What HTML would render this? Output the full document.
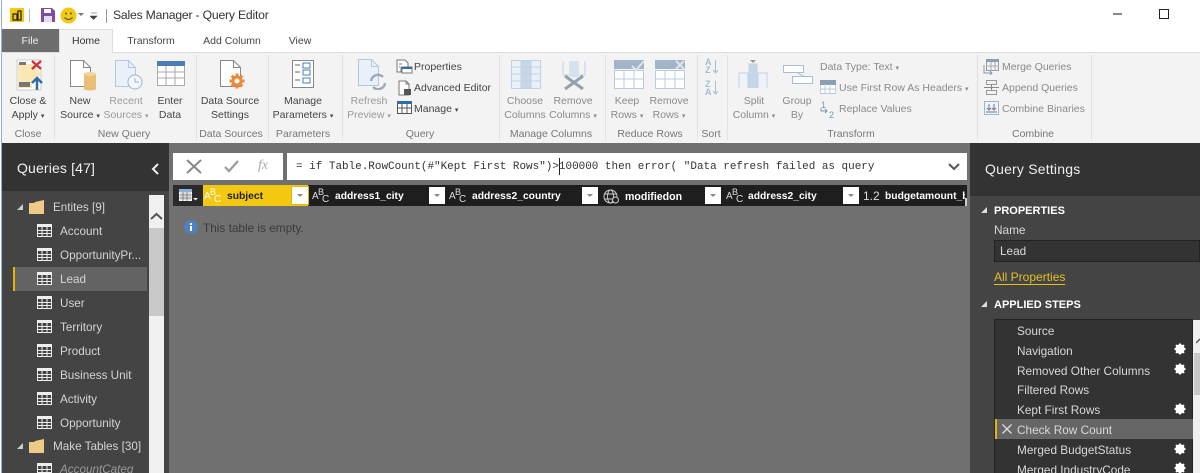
<!DOCTYPE html>
<html><head><meta charset="utf-8">
<style>
html,body{margin:0;padding:0;width:1200px;height:473px;overflow:hidden;background:#fff}
body{font-family:"Liberation Sans",sans-serif;font-size:10.5px;color:#444;position:relative}
.b,.t,.c,svg{position:absolute}
.t{white-space:nowrap}
.c{white-space:nowrap;text-align:center;transform:translateX(-50%)}
.g{color:#8a8a8a}
.l{color:#777}
.q{color:#d4d4d4;font-size:11.7px}
.h{color:#fff;font-weight:bold;font-size:10.3px}
.s{color:#d8d8d8;font-size:11.8px}
.m{font-family:"Liberation Mono",monospace;font-size:10.96px;color:#333}
.dd{position:absolute;width:16px;height:17px;background:#fff;top:187px}
.dd:after{content:"";position:absolute;left:5px;top:7px;border:3px solid transparent;border-top:3px solid #888}
.abc{position:absolute;color:#ddd;font-size:10px;top:191px}
.abc sup{position:absolute;left:6px;top:-4px;font-size:9px;line-height:10px}
.abc i{position:absolute;left:10px;top:3px;font-style:normal;font-size:10px}
.k{font-size:7px}
</style></head><body>
<div class="b" style="left:1px;top:0;width:1px;height:473px;background:#8db4d8"></div>

<!-- title bar -->
<div class="b" style="left:10px;top:8px;width:14px;height:14px;background:#f2c811"></div>
<svg style="left:10px;top:8px" width="14" height="14"><path d="M3 6h4v6H3zM8 3h3v9H8z" fill="none" stroke="#222" stroke-width="1.2"/></svg>
<div class="b" style="left:29px;top:9px;width:1px;height:13px;background:#bbb"></div>
<svg style="left:41px;top:8px" width="14" height="14"><path d="M0 0h11l3 3v11H0z" fill="#7a4fa3"/><rect x="3" y="1" width="7" height="4" fill="#fff"/><rect x="3" y="8" width="8" height="6" fill="#e6dcef"/></svg>
<svg style="left:60px;top:7px" width="17" height="17"><circle cx="8.500" cy="8.500" r="8" fill="#f2c811"/><circle cx="6" cy="6.500" r="1" fill="#555"/><circle cx="11" cy="6.500" r="1" fill="#555"/><path d="M4.500 10.500q4 4 8 0" stroke="#555" fill="none"/></svg>
<svg style="left:78px;top:13px" width="7" height="5"><path d="M0 0h6L3 3z" fill="#777"/></svg>
<svg style="left:90px;top:12px" width="8" height="8"><path d="M1 1h6M0 4h7L3.500 7.500z" fill="#444" stroke="#444" stroke-width=".6"/></svg>
<div class="b" style="left:106px;top:9px;width:1px;height:14px;background:#999"></div>
<div class="t" style="left:113px;top:8px;font-size:12.2px;color:#333;letter-spacing:-.2px">Sales Manager - Query Editor</div>
<div class="b" style="left:1113px;top:13px;width:9px;height:2px;background:#888"></div>
<div class="b" style="left:1159px;top:9px;width:8px;height:8px;border:1.500px solid #222"></div>

<!-- tabs -->
<div class="b" style="left:2px;top:29px;width:57px;height:23px;background:#6d6d6d"></div>
<div class="c" style="left:30px;top:35px;color:#eee">File</div>
<div class="b" style="left:0;top:52px;width:1200px;height:1px;background:#ddd"></div>
<div class="b" style="left:59px;top:29px;width:54px;height:24px;background:#f3f3f3;border:1px solid #ddd;border-bottom:0;box-sizing:border-box"></div>
<div class="c" style="left:86px;top:35px;color:#333">Home</div>
<div class="c" style="left:151px;top:35px;color:#444">Transform</div>
<div class="c" style="left:232px;top:35px;color:#444">Add Column</div>
<div class="c" style="left:300px;top:35px;color:#444">View</div>

<!-- ribbon -->
<div class="b" style="left:2px;top:53px;width:1198px;height:90px;background:#f3f3f3"></div>
<div class="b" style="left:54px;top:55px;width:1px;height:85px;background:#e2e2e2"></div>
<div class="b" style="left:196px;top:55px;width:1px;height:85px;background:#e2e2e2"></div>
<div class="b" style="left:268px;top:55px;width:1px;height:85px;background:#e2e2e2"></div>
<div class="b" style="left:342px;top:55px;width:1px;height:85px;background:#e2e2e2"></div>
<div class="b" style="left:499px;top:55px;width:1px;height:85px;background:#e2e2e2"></div>
<div class="b" style="left:605px;top:55px;width:1px;height:85px;background:#e2e2e2"></div>
<div class="b" style="left:697px;top:55px;width:1px;height:85px;background:#e2e2e2"></div>
<div class="b" style="left:727px;top:55px;width:1px;height:85px;background:#e2e2e2"></div>
<div class="b" style="left:977px;top:55px;width:1px;height:85px;background:#e2e2e2"></div>
<div class="b" style="left:1091px;top:55px;width:1px;height:85px;background:#e2e2e2"></div>

<!-- ribbon icons -->
<svg style="left:16px;top:59px" width="30" height="32"><rect x="1" y="1" width="24" height="30" fill="#fff" stroke="#ccc"/><path d="M2 5h14l8 8v4l-8 6v6H2z" fill="#fbe6b5"/><rect x="3" y="3" width="7" height="3" fill="#777"/><rect x="3" y="23" width="11" height="5" fill="#777"/><path d="M16 2l9 8M25 2L16 10" stroke="#d13438" stroke-width="2.500"/><path d="M21 31V20M16 24l5-5 5 5" stroke="#2f6ea5" stroke-width="2.500" fill="none"/></svg>
<svg style="left:70px;top:60px" width="27" height="31"><path d="M.5.500h13l7 7v19H.5z" fill="#fff" stroke="#888"/><path d="M13.500.500v7h7" fill="none" stroke="#888"/><rect x="14" y="14" width="12" height="15" fill="#e9bf75"/><ellipse cx="20" cy="14" rx="6" ry="2" fill="#f3d498"/><ellipse cx="20" cy="29" rx="6" ry="1.500" fill="#e9bf75"/></svg>
<svg style="left:115px;top:60px" width="28" height="31"><path d="M.5.500h13l7 7v19H.5z" fill="#eaf0f9" stroke="#b4c6de"/><path d="M13.500.500v7h7" fill="none" stroke="#b4c6de"/><circle cx="20" cy="22" r="7" fill="#f3f7fb" stroke="#9db5d2"/><path d="M20 18v4h4" fill="none" stroke="#9db5d2"/></svg>
<svg style="left:157px;top:61px" width="28" height="25"><rect x=".5" y=".5" width="27" height="24" fill="#fff" stroke="#aaa"/><rect width="28" height="5" fill="#4a7eb5"/><path d="M0 11h28M0 17h28M9 5v20M18 5v20" stroke="#aaa"/></svg>
<svg style="left:220px;top:60px" width="27" height="31"><path d="M.5.500h13l7 7v19H.5z" fill="#fff" stroke="#888"/><path d="M13.500.500v7h7" fill="none" stroke="#888"/><path d="M17 13.500v15M9.500 21h15M11.700 15.700l10.600 10.600M22.300 15.700L11.700 26.300" stroke="#ea8a3a" stroke-width="3"/><circle cx="17" cy="21" r="4" fill="#fff" stroke="#ea8a3a" stroke-width="3"/></svg>
<svg style="left:292px;top:60px" width="24" height="29"><rect x=".5" y=".5" width="21" height="27" fill="#fff" stroke="#888"/><path d="M3 5h5M3 12h5M3 20h5" stroke="#666"/><path d="M11 3h7v5h-7zM11 10h7v5h-7zM11 18h7v5h-7z" fill="#fff" stroke="#4a7eb5"/></svg>
<svg style="left:358px;top:59px" width="28" height="31"><path d="M.5.500h13l7 7v19H.5z" fill="#eaf0f9" stroke="#b4c6de"/><path d="M13.500.500v7h7" fill="none" stroke="#b4c6de"/><path d="M13 22a7 7 0 0 1 12-4M27 24a7 7 0 0 1-12 4" fill="none" stroke="#9aa9ba" stroke-width="2.400"/></svg>
<svg style="left:396px;top:59px" width="17" height="15"><path d="M1 1h8l3 3v4H5v5H1z" fill="#fff" stroke="#777"/><path d="M3 5h3M3 8h1" stroke="#777"/><rect x="6" y="8" width="10" height="6" fill="#fff" stroke="#777"/><rect x="6" y="8" width="10" height="2" fill="#2f6ea5"/></svg>
<svg style="left:398px;top:80px" width="15" height="16"><path d="M1 1h7l3 3v11H1z" fill="#fff" stroke="#777"/><path d="M8 1v3h3" fill="none" stroke="#777"/><rect x="6" y="9" width="7" height="6" fill="#555"/></svg>
<svg style="left:397px;top:101px" width="15" height="13"><rect x=".5" y=".5" width="14" height="12" fill="#fff" stroke="#555"/><rect width="15" height="3" fill="#2f6ea5"/><path d="M0 7h15M5 3v10M10 3v10" stroke="#555"/></svg>
<svg style="left:511px;top:60px" width="30" height="29"><rect x=".5" y=".5" width="29" height="28" fill="#eaf0f8" stroke="#c2d2e5"/><rect x="10" y="1" width="10" height="27" fill="#c6d6e8"/><path d="M0 7h30M0 14h30M0 21h30M10 0v29M20 0v29" stroke="#c2d2e5"/></svg>
<svg style="left:562px;top:60px" width="24" height="30"><path d="M1 1v14h22V1M8 1v14M16 1v14" fill="none" stroke="#c2d2e5"/><rect x="8" y="1" width="8" height="16" fill="#d5e1ee"/><path d="M7 13l5 5 5-5z" fill="#d5e1ee"/><path d="M3 16l18 13M21 16L3 29" stroke="#94a0ad" stroke-width="3"/></svg>
<svg style="left:614px;top:60px" width="31" height="29"><rect x=".5" y="10.500" width="29" height="18" fill="#fff" stroke="#b8cbe0"/><rect width="30" height="9" fill="#a4b4c8"/><path d="M0 19h30M10 10v19M20 10v19" stroke="#b8cbe0"/><path d="M18 6l4 4 8-9" stroke="#dde5ee" stroke-width="2" fill="none"/></svg>
<svg style="left:655px;top:60px" width="31" height="29"><rect x=".5" y="10.500" width="29" height="18" fill="#fff" stroke="#b8cbe0"/><rect width="30" height="9" fill="#a4b4c8"/><path d="M0 19h30M10 10v19M20 10v19" stroke="#b8cbe0"/><path d="M21 1l8 8M29 1l-8 8" stroke="#dde5ee" stroke-width="2"/></svg>
<div class="t" style="left:705px;top:58px;font-size:9px;line-height:8px;color:#a8bcd2;font-weight:bold">A<br>Z</div>
<div class="t" style="left:705px;top:80px;font-size:9px;line-height:8px;color:#a8bcd2;font-weight:bold">Z<br>A</div>
<svg style="left:712px;top:60px" width="7" height="36"><path d="M3.500 0v13M1 10l2.500 3 2.500-3M3.500 21v13M1 31l2.500 3 2.500-3" fill="none" stroke="#a8bcd2"/></svg>
<svg style="left:738px;top:59px" width="31" height="32"><path d="M1 29V14h9v15M11 29V5h8v24M20 29V14h9v15" fill="#eef3f9" stroke="#c2d2e5"/><rect x="11" y="5" width="8" height="24" fill="#c6d6e8"/><path d="M12 1h6l-3 3z" fill="#999"/></svg>
<svg style="left:782px;top:64px" width="32" height="21"><rect x="1.500" y="1.500" width="20" height="7" fill="#fff" stroke="#a8bcd2"/><rect x="10.500" y="12.500" width="20" height="7" fill="#fff" stroke="#a8bcd2"/><path d="M14 8l9 5" stroke="#a8bcd2"/></svg>
<svg style="left:820px;top:80px" width="16" height="14"><rect x=".5" y=".5" width="15" height="13" fill="#fff" stroke="#b8cbe0"/><rect width="16" height="5" fill="#8b9db3"/><path d="M0 9h16M5 4v10M10 4v10" stroke="#b8cbe0"/></svg>
<div class="t" style="left:821px;top:100px;font-size:9px;color:#7d97b5;line-height:10px">1<br><span style="margin-left:8px">2</span></div>
<svg style="left:820px;top:108px" width="8" height="6"><path d="M1 0v3h6M5 1l2 2-2 2" fill="none" stroke="#7d97b5"/></svg>
<svg style="left:983px;top:59px" width="16" height="16"><rect x="3.500" y=".5" width="12" height="11" fill="#eef3f9" stroke="#999"/><rect x="3" width="13" height="3" fill="#8b9db3"/><path d="M1 6v8h8M7 12l2 2-2 2" fill="none" stroke="#7d97b5"/><path d="M8 3v9M12 3v9M3 7h13" stroke="#aaa"/></svg>
<svg style="left:984px;top:80px" width="15" height="15"><rect x="2.500" y=".5" width="10" height="4" fill="#eef3f9" stroke="#999"/><rect x="2.500" y="10.500" width="10" height="4" fill="#eef3f9" stroke="#999"/><path d="M0 7.500h15M7.500 4v6" stroke="#888"/></svg>
<svg style="left:984px;top:101px" width="15" height="14"><rect x=".5" y=".5" width="14" height="13" fill="#eef3f9" stroke="#9db5d2"/><path d="M5 3v6M3 7l2 2 2-2M10 3v6M8 7l2 2 2-2M2 11h11" fill="none" stroke="#778"/></svg>

<!-- ribbon labels -->
<div class="c" style="left:28px;top:94px;line-height:14px">Close &amp;<br>Apply <span class="k">▾</span></div>
<div class="c l" style="left:28px;top:128px">Close</div>
<div class="c" style="left:80px;top:94px;line-height:14px">New<br>Source <span class="k">▾</span></div>
<div class="c" style="left:126px;top:94px;line-height:14px;color:#9a9a9a">Recent<br>Sources <span class="k">▾</span></div>
<div class="c" style="left:170px;top:94px;line-height:14px">Enter<br>Data</div>
<div class="c l" style="left:124px;top:128px">New Query</div>
<div class="c" style="left:230px;top:94px;line-height:14px">Data Source<br>Settings</div>
<div class="c l" style="left:231px;top:128px">Data Sources</div>
<div class="c" style="left:303px;top:94px;line-height:14px">Manage<br>Parameters <span class="k">▾</span></div>
<div class="c l" style="left:303px;top:128px">Parameters</div>
<div class="c" style="left:369px;top:94px;line-height:14px;color:#9a9a9a">Refresh<br>Preview <span class="k">▾</span></div>
<div class="t" style="left:414px;top:61px">Properties</div>
<div class="t" style="left:414px;top:82px">Advanced Editor</div>
<div class="t" style="left:414px;top:103px">Manage <span class="k">▾</span></div>
<div class="c l" style="left:420px;top:128px">Query</div>
<div class="c g" style="left:525px;top:94px;line-height:14px">Choose<br>Columns</div>
<div class="c g" style="left:573px;top:94px;line-height:14px">Remove<br>Columns <span class="k">▾</span></div>
<div class="c l" style="left:551px;top:128px">Manage Columns</div>
<div class="c g" style="left:627px;top:94px;line-height:14px">Keep<br>Rows <span class="k">▾</span></div>
<div class="c g" style="left:669px;top:94px;line-height:14px">Remove<br>Rows <span class="k">▾</span></div>
<div class="c l" style="left:650px;top:128px">Reduce Rows</div>
<div class="c l" style="left:711px;top:128px">Sort</div>
<div class="c g" style="left:754px;top:94px;line-height:14px">Split<br>Column <span class="k">▾</span></div>
<div class="c g" style="left:797px;top:94px;line-height:14px">Group<br>By</div>
<div class="t g" style="left:820px;top:61px">Data Type: Text <span class="k">▾</span></div>
<div class="t g" style="left:839px;top:82px">Use First Row As Headers <span class="k">▾</span></div>
<div class="t g" style="left:839px;top:103px">Replace Values</div>
<div class="c l" style="left:851px;top:128px">Transform</div>
<div class="t g" style="left:1002px;top:61px">Merge Queries</div>
<div class="t g" style="left:1002px;top:82px">Append Queries</div>
<div class="t g" style="left:1002px;top:103px">Combine Binaries</div>
<div class="c l" style="left:1033px;top:128px">Combine</div>

<!-- main center -->
<div class="b" style="left:2px;top:143px;width:1198px;height:330px;background:#707070"></div>

<!-- left panel -->
<div class="b" style="left:2px;top:143px;width:167px;height:48px;background:#333"></div>
<div class="b" style="left:2px;top:191px;width:167px;height:282px;background:#444"></div>
<div class="t" style="left:17px;top:160px;color:#f0f0f0;font-size:14px;letter-spacing:.15px">Queries [47]</div>
<svg style="left:151px;top:162px" width="9" height="14"><path d="M7 2L2 7l5 5" fill="none" stroke="#eee" stroke-width="2"/></svg>
<!-- scrollbar -->
<div class="b" style="left:149px;top:195px;width:15px;height:278px;background:#f0f0f0"></div>
<div class="b" style="left:149px;top:228px;width:15px;height:88px;background:#c8c8c8"></div>
<svg style="left:150px;top:212px" width="13" height="9"><path d="M1 7l5.500-5L12 7" fill="none" stroke="#555" stroke-width="2"/></svg>
<!-- highlight row -->
<div class="b" style="left:13px;top:267px;width:134px;height:24px;background:#636363"></div>
<div class="b" style="left:13px;top:267px;width:2px;height:24px;background:#e8b500"></div>
<!-- folders -->
<svg style="left:17px;top:204px" width="7" height="7"><path d="M6 0v6H0z" fill="#ccc"/></svg>
<svg style="left:29px;top:200px" width="16" height="14"><path d="M0 3h5l1-1 9-2v14H0z" fill="#efc988"/></svg>
<div class="t q" style="left:53px;top:201px">Entites [9]</div>
<svg style="left:17px;top:443px" width="7" height="7"><path d="M6 0v6H0z" fill="#ccc"/></svg>
<svg style="left:29px;top:439px" width="16" height="14"><path d="M0 3h5l1-1 9-2v14H0z" fill="#efc988"/></svg>
<div class="t q" style="left:53px;top:440px">Make Tables [30]</div>
<!-- query rows -->
<svg style="left:37px;top:224px" width="15" height="249" fill="none">
<defs><g id="g"><rect x=".5" y=".5" width="14" height="12" fill="#444" stroke="#eee"/><rect width="15" height="3" fill="#eee"/><path d="M0 6.500h15M0 9.500h15M5 3v10M10 3v10" stroke="#eee"/></g></defs>
<use href="#g" y="0"/><use href="#g" y="24"/><use href="#g" y="48"/><use href="#g" y="72"/><use href="#g" y="96"/><use href="#g" y="120"/><use href="#g" y="144"/><use href="#g" y="168"/><use href="#g" y="192"/><use href="#g" y="239"/>
</svg>
<div class="t q" style="left:60px;top:225px">Account</div>
<div class="t q" style="left:60px;top:249px">OpportunityPr...</div>
<div class="t q" style="left:60px;top:273px">Lead</div>
<div class="t q" style="left:60px;top:297px">User</div>
<div class="t q" style="left:60px;top:321px">Territory</div>
<div class="t q" style="left:60px;top:345px">Product</div>
<div class="t q" style="left:60px;top:369px">Business Unit</div>
<div class="t q" style="left:60px;top:393px">Activity</div>
<div class="t q" style="left:60px;top:417px">Opportunity</div>
<div class="t q" style="left:60px;top:463px;font-style:italic;color:#999">AccountCateg</div>

<!-- formula bar -->
<div class="b" style="left:173px;top:153px;width:110px;height:27px;background:#fff"></div>
<svg style="left:186px;top:159px" width="16" height="15"><path d="M1 1l14 13M15 1L1 14" stroke="#888" stroke-width="2"/></svg>
<svg style="left:224px;top:160px" width="15" height="13"><path d="M1 7l4 4 9-10" fill="none" stroke="#999" stroke-width="2.200"/></svg>
<div class="t" style="left:258px;top:158px;font-family:'Liberation Serif',serif;font-style:italic;font-size:14px;color:#aaa">fx</div>
<div class="b" style="left:287px;top:153px;width:680px;height:27px;background:#fff"></div>
<div class="t m" style="left:296px;top:161px">= if Table.RowCount(#"Kept First Rows")&gt;100000 then error( "Data refresh failed as query</div>
<div class="b" style="left:559px;top:158px;width:1px;height:17px;background:#222"></div>
<svg style="left:948px;top:163px" width="12" height="8"><path d="M1 1l5 5 5-5" fill="none" stroke="#555" stroke-width="2"/></svg>

<!-- column headers -->
<div class="b" style="left:173px;top:185px;width:794px;height:21px;background:#1e1e1e"></div>
<div class="b" style="left:173px;top:185px;width:30px;height:21px;background:#2a2a2a"></div>
<svg style="left:179px;top:189px" width="19" height="13"><rect x=".5" y=".5" width="12" height="11" fill="#ddd" stroke="#fff"/><rect width="13" height="3" fill="#8fb2dc"/><path d="M0 6h13M0 9h13M4 3v9M8 3v9" stroke="#555" stroke-width=".6"/><path d="M14 9h5l-2.500 2.500z" fill="#eee"/></svg>
<div class="b" style="left:203px;top:185px;width:105px;height:21px;background:#f2c811"></div>
<div class="b" style="left:292px;top:187px;width:16px;height:17px;background:#fff;outline:1px solid #e8b500"></div>
<svg style="left:297px;top:194px" width="6" height="4"><path d="M0 0h6L3 3z" fill="#888"/></svg>
<div class="abc" style="left:204px;color:#fff">A<sup>B</sup><i>C</i></div>
<div class="t h" style="left:227px;top:191px;color:#222">subject</div>
<div class="abc" style="left:312px">A<sup>B</sup><i>C</i></div>
<div class="t h" style="left:335px;top:191px">address1_city</div>
<div class="dd" style="left:429px"></div>
<div class="abc" style="left:449px">A<sup>B</sup><i>C</i></div>
<div class="t h" style="left:472px;top:191px">address2_country</div>
<div class="dd" style="left:582px"></div>
<svg style="left:603px;top:189px" width="17" height="15"><circle cx="7.500" cy="7.500" r="6.500" fill="none" stroke="#ccc"/><ellipse cx="7.500" cy="7.500" rx="3" ry="6.500" fill="none" stroke="#ccc"/><path d="M1 5h13M1 10h13" stroke="#ccc"/><circle cx="12.500" cy="11" r="3" fill="#222" stroke="#ccc"/></svg>
<div class="t h" style="left:625px;top:191px;font-size:10.6px">modifiedon</div>
<div class="dd" style="left:705px"></div>
<div class="abc" style="left:726px">A<sup>B</sup><i>C</i></div>
<div class="t h" style="left:748px;top:191px">address2_city</div>
<div class="dd" style="left:843px"></div>
<div class="t" style="left:863px;top:189px;color:#ddd;font-size:12px">1.2</div>
<div class="t h" style="left:885px;top:191px;width:80px;overflow:hidden">budgetamount_base</div>
<div class="b" style="left:965px;top:198px;width:2px;height:8px;background:#ccc"></div>

<!-- empty message -->
<svg style="left:184px;top:220px" width="14" height="14"><circle cx="7" cy="7" r="7" fill="#4f81bd"/><rect x="6" y="6" width="2" height="5" fill="#fff"/><rect x="6" y="3" width="2" height="2" fill="#fff"/></svg>
<div class="t" style="left:203px;top:221px;color:#3a3a3a;font-size:11.8px">This table is empty.</div>

<!-- right panel -->
<div class="b" style="left:970px;top:143px;width:230px;height:330px;background:#444"></div>
<div class="b" style="left:970px;top:143px;width:230px;height:53px;background:#333"></div>
<div class="t" style="left:985px;top:161px;color:#eee;font-size:14px;letter-spacing:.2px">Query Settings</div>
<svg style="left:981px;top:207px" width="7" height="7"><path d="M6 0v6H0z" fill="#ddd"/></svg>
<div class="t" style="left:994px;top:205px;color:#fff;font-weight:bold;font-size:11px">PROPERTIES</div>
<div class="t s" style="left:994px;top:223px">Name</div>
<div class="b" style="left:994px;top:240px;width:206px;height:22px;background:#333;border:1px solid #222;box-sizing:border-box"></div>
<div class="t s" style="left:1000px;top:244px">Lead</div>
<div class="t" style="left:994px;top:270px;color:#e8bf20;font-size:12px;border-bottom:1px solid #e8bf20">All Properties</div>
<svg style="left:981px;top:301px" width="7" height="7"><path d="M6 0v6H0z" fill="#ddd"/></svg>
<div class="t" style="left:994px;top:299px;color:#fff;font-weight:bold;font-size:11px">APPLIED STEPS</div>
<div class="b" style="left:994px;top:319px;width:199px;height:154px;background:#333;border:1px solid #222;border-bottom:0;box-sizing:border-box"></div>
<div class="b" style="left:1193px;top:320px;width:7px;height:153px;background:#f0f0f0"></div>
<div class="b" style="left:1194px;top:353px;width:6px;height:42px;background:#c8c8c8"></div>
<svg style="left:1196px;top:338px" width="4" height="6"><path d="M0 5l4-4" fill="none" stroke="#555" stroke-width="1.500"/></svg>
<div class="b" style="left:995px;top:419px;width:198px;height:20px;background:#666"></div>
<div class="b" style="left:995px;top:419px;width:2px;height:20px;background:#e8b500"></div>
<svg style="left:1002px;top:424px" width="10" height="10"><path d="M.5.500l9 9M9.500.500l-9 9" stroke="#ddd" stroke-width="1.300"/></svg>
<div class="t s" style="left:1017px;top:324px">Source</div>
<div class="t s" style="left:1017px;top:344px">Navigation</div>
<div class="t s" style="left:1017px;top:364px">Removed Other Columns</div>
<div class="t s" style="left:1017px;top:383px">Filtered Rows</div>
<div class="t s" style="left:1017px;top:403px">Kept First Rows</div>
<div class="t s" style="left:1017px;top:423px">Check Row Count</div>
<div class="t s" style="left:1017px;top:443px">Merged BudgetStatus</div>
<div class="t s" style="left:1017px;top:463px">Merged IndustryCode</div>
<svg style="left:0;top:0;width:1200px;height:473px" width="1200" height="473">
<defs><g id="w"><circle r="3.500" fill="none" stroke="#fff" stroke-width="2.400"/><path d="M0-5.500V5.500M-5.500 0H5.500M-4-4L4 4M4-4L-4 4" stroke="#fff" stroke-width="1.800"/></g></defs>
<use href="#w" x="1180" y="349"/><use href="#w" x="1180" y="369"/><use href="#w" x="1180" y="409"/><use href="#w" x="1180" y="449"/><use href="#w" x="1180" y="468"/>
</svg>
</body></html>
